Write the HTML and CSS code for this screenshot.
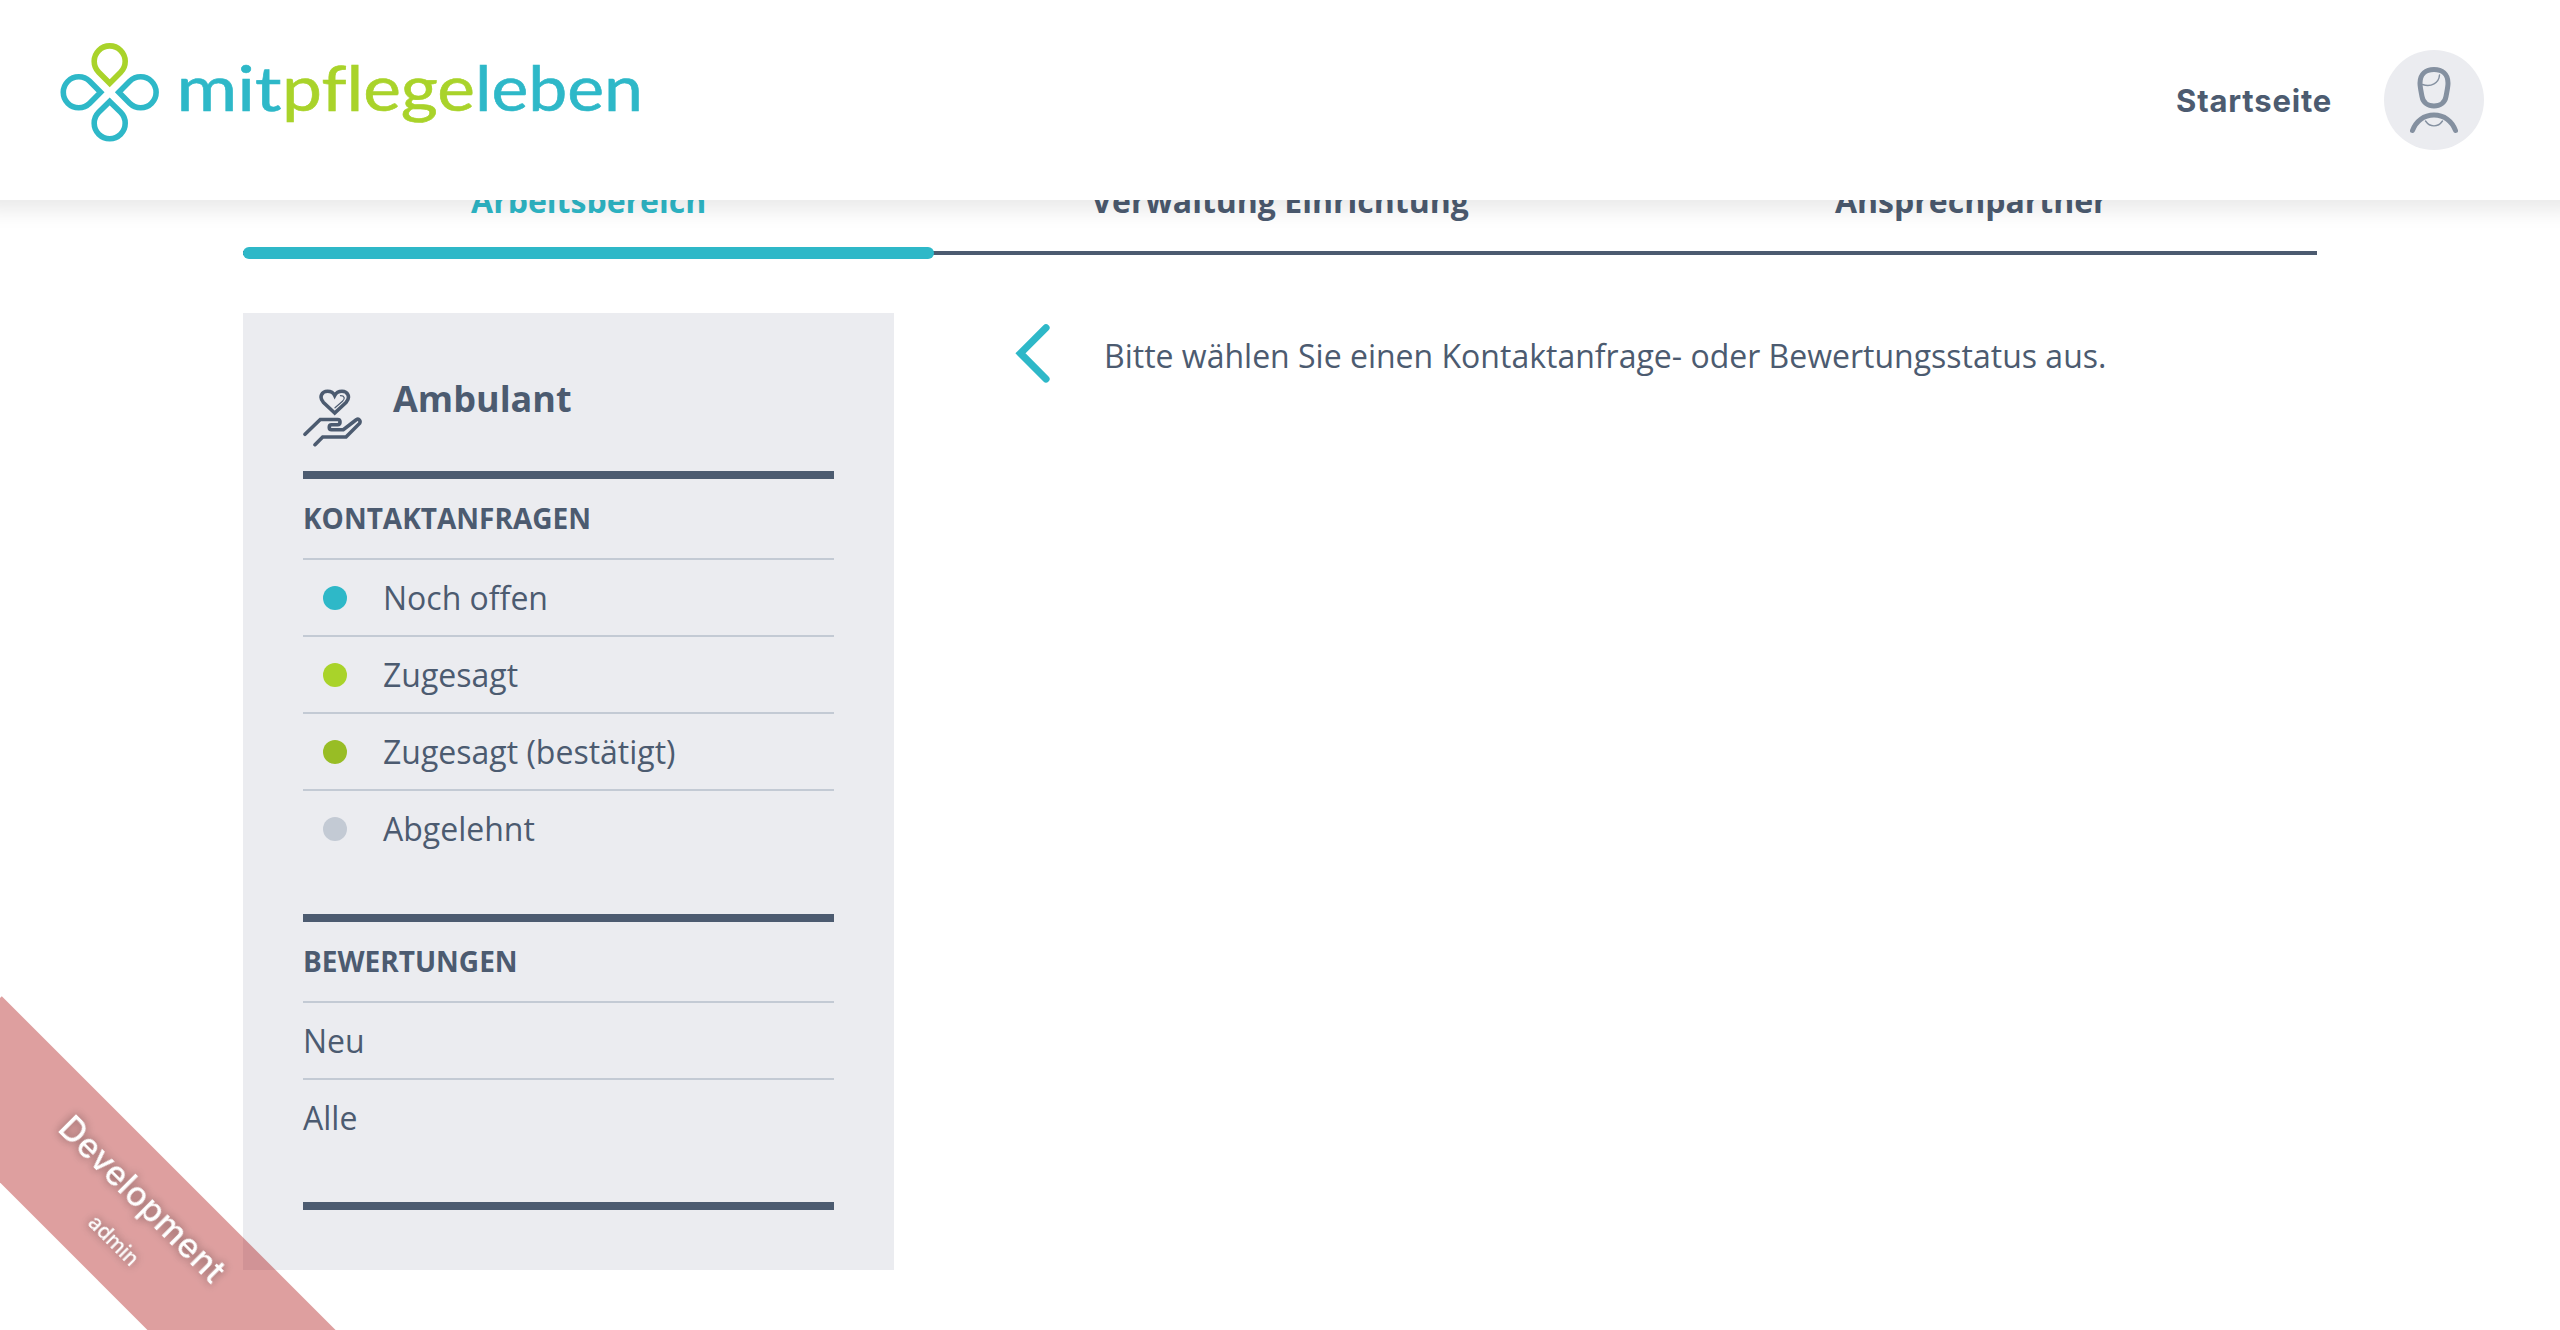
FILE: index.html
```html
<!DOCTYPE html>
<html lang="de">
<head>
<meta charset="utf-8">
<title>mitpflegeleben</title>
<link rel="stylesheet" href="styles.css">
</head>
<body>
<header class="header">
  <svg class="logo" viewBox="0 0 600 120" role="img" aria-label="mitpflegeleben">
    <g class="flower" transform="translate(49.7 52.3)">
      <path class="green" d="M0-9.1-11-20A15.5 15.5 0 1 1 11-20Z"/>
      <path d="M0-9.1-11-20A15.5 15.5 0 1 1 11-20Z" transform="rotate(90)"/>
      <path d="M0-9.1-11-20A15.5 15.5 0 1 1 11-20Z" transform="rotate(180)"/>
      <path d="M0-9.1-11-20A15.5 15.5 0 1 1 11-20Z" transform="rotate(270)"/>
    </g>
    <g class="wordmark">
      <text x="116.500" y="70.500" textLength="105" lengthAdjust="spacingAndGlyphs">mit</text>
      <text class="green" x="222" y="70.500" textLength="193" lengthAdjust="spacingAndGlyphs">pflege</text>
      <text x="415" y="70.500" textLength="168" lengthAdjust="spacingAndGlyphs">leben</text>
    </g>
  </svg>
  <nav class="nav">
    <a class="nav-link">Startseite</a>
    <a class="avatar">
      <svg viewBox="0 0 100 100" aria-hidden="true">
        <path d="M36 33C36 24 42 19.500 50 19.500S64 24 64 33C64 37 63 41 62 46.500C61 52.500 56 56 50 56S39 52.500 38 46.500C37 41 36 37 36 33ZM28.500 80.500C32 71 40 65 50 65S68 71 71.500 80.500"/>
        <path class="thin" d="M38.500 34.500C47 37.500 55 33 55.500 25M41.500 71C46 77.500 54 77.500 58.500 71"/>
      </svg>
    </a>
  </nav>
</header>
<main class="container">
  <div class="tabs">
    <a class="tab active">Arbeitsbereich</a>
    <a class="tab">Verwaltung Einrichtung</a>
    <a class="tab">Ansprechpartner</a>
  </div>
  <div class="content">
    <aside class="sidebar">
      <div class="sidebar-head">
        <svg class="care" viewBox="0 0 60 64" aria-hidden="true">
          <path d="M31.700 28 20.500 17.500C15.500 12 19 6.300 24.500 6.300C28 6.300 30.500 8 31.700 10.500C33 8 35.500 6.300 39 6.300C44.500 6.300 48 12 43 17.500ZM2 49.300 17.300 34.500H34.700C37.800 34.500 37.800 39.700 34.700 39.700H28.500C25.500 39.700 25.500 44.700 28.500 44.700H40.300L53.200 34.800C56 33 58 36 56.500 38.500L43 52H19.700L12 59.700"/>
          <path class="thin" d="M37.500 10.700C41.500 10.700 42.500 13.500 39.500 16.200L32 22.800"/>
        </svg>
        <h2>Ambulant</h2>
      </div>
      <section class="group">
        <h3>Kontaktanfragen</h3>
        <ul>
          <li><i class="dot open"></i>Noch offen</li>
          <li><i class="dot accepted"></i>Zugesagt</li>
          <li><i class="dot confirmed"></i>Zugesagt (bestätigt)</li>
          <li><i class="dot declined"></i>Abgelehnt</li>
        </ul>
      </section>
      <section class="group last">
        <h3>Bewertungen</h3>
        <ul>
          <li>Neu</li>
          <li>Alle</li>
        </ul>
      </section>
    </aside>
    <div class="message">
      <svg class="back" viewBox="0 0 40 60" aria-hidden="true"><path d="M32 4.700 6.500 30.300 32 56"/></svg>
      <p>Bitte wählen Sie einen Kontaktanfrage- oder Bewertungsstatus aus.</p>
    </div>
  </div>
</main>
<div class="ribbon"><span class="env">Development</span><span class="role">admin</span></div>
</body>
</html>
```
FILE: styles.css
```css
* { box-sizing: border-box; }
body {
  margin: 0;
  height: 1330px;
  overflow: hidden;
  background: #fff;
  color: #4c5b70;
  font: 32px/75px "Open Sans", sans-serif;
}
h2, h3, p, ul { margin: 0; padding: 0; }
svg { display: block; fill: none; stroke-linecap: round; }

.header {
  position: relative;
  z-index: 2;
  display: flex;
  justify-content: space-between;
  height: 200px;
  padding: 40px 76px 0 60px;
  background: #fff;
  box-shadow: 0 -10px 20px 20px rgba(0, 0, 0, .09);
}
.logo { width: 600px; height: 120px; }
.flower { stroke: #2eb8c8; stroke-width: 5.600; }
.flower .green { stroke: #a9d32a; }
.wordmark {
  fill: #2eb8c8;
  stroke: #2eb8c8;
  stroke-width: .6;
  font: 61px Lato, sans-serif;
  font-variant-ligatures: none;
}
.wordmark .green { fill: #a9d32a; stroke: #a9d32a; }
.nav { display: flex; align-items: center; gap: 52px; height: 100px; margin-top: 10px; }
.nav-link { font: 700 31px Inter, sans-serif; letter-spacing: .8px; }
.avatar { width: 100px; height: 100px; border-radius: 50%; background: #ebecf0; }
.avatar svg { stroke: #8490a0; stroke-width: 5; }
.avatar .thin { stroke-width: 1.400; }

.container { width: 2074px; margin: 0 auto; }
.tabs {
  display: grid;
  grid-template-columns: repeat(3, 1fr);
  height: 59px;
  background: linear-gradient(#4c5b70, #4c5b70) 0 51px / 100% 4px no-repeat;
}
.tab {
  height: 74px;
  margin-top: -15px;
  font-size: 32px;
  line-height: 1;
  font-weight: 700;
  text-align: center;
}
.tab.active {
  display: flex;
  flex-direction: column;
  justify-content: space-between;
  color: #2eb8c8;
}
.tab.active::after { content: ""; height: 12px; border-radius: 6px; background: #2eb8c8; }

.content { display: flex; align-items: flex-start; padding-top: 54px; }
.sidebar { width: 651px; height: 957px; padding: 60px; background: #ebecf0; }
.sidebar-head { display: flex; gap: 30px; height: 98px; padding-top: 12px; }
.care { width: 60px; height: 64px; stroke: #4c5b70; stroke-width: 3.600; }
.care .thin { stroke-width: 1.200; }
h2 { font-size: 36px; line-height: 28px; font-weight: 700; }
.group { height: 443px; border-top: 8px solid #4c5b70; }
.group.last { height: 296px; border-bottom: 8px solid #4c5b70; }
h3 { height: 79px; line-height: 79px; font-size: 28px; font-weight: 700; text-transform: uppercase; }
ul { list-style: none; }
li { display: flex; align-items: center; height: 77px; border-top: 2px solid #c3cad4; }
.dot { width: 24px; height: 24px; margin: 0 36px 0 20px; border-radius: 50%; }
.open { background: #2eb8c8; }
.accepted { background: #a9d32a; }
.confirmed { background: #98bd25; }
.declined { background: #c3cad4; }
.message { display: flex; padding-left: 120px; }
.back { width: 40px; height: 60px; margin-top: 10px; stroke: #2eb8c8; stroke-width: 7.200; }
.message p { margin-left: 50px; line-height: 86px; }

.ribbon {
  position: fixed;
  z-index: 3;
  left: -117px;
  top: 1149.500px;
  width: 490px;
  height: 133px;
  display: flex;
  flex-direction: column;
  align-items: center;
  padding-top: 24px;
  transform: rotate(45deg);
  background: rgba(168, 0, 0, .376);
  color: #fff;
  font-family: Inter, sans-serif;
  font-weight: 500;
  text-shadow: 0 0 10px rgba(0, 0, 0, .45);
}
.env { margin-right: 4px; font-size: 34px; line-height: 40px; letter-spacing: .4px; }
.role { margin: 17px 0 0 14px; font-size: 21px; line-height: 26px; }
```
